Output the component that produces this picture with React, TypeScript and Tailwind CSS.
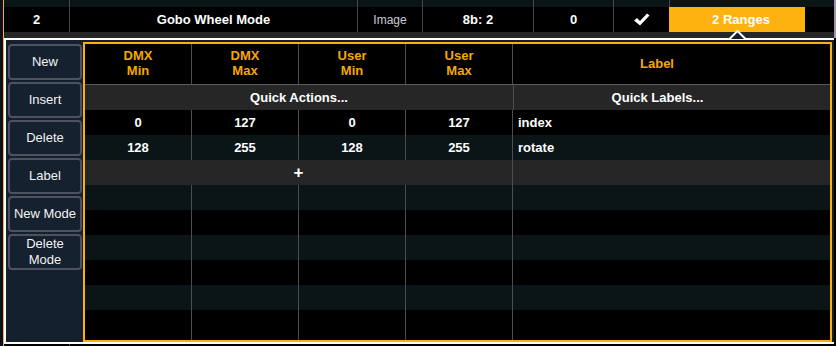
import React from 'react';

const topCols = [
    { w: 'w-[65px]', text: '2', cls: 'font-bold text-white' },
    { w: 'w-[288px]', text: 'Gobo Wheel Mode', cls: 'font-bold text-white' },
    { w: 'w-[65px]', text: 'Image', cls: 'text-[12px] text-[#c9c9d6]' },
    { w: 'w-[111px]', text: '8b: 2', cls: 'font-bold text-white' },
    { w: 'w-[80px]', text: '0', cls: 'font-bold text-white' },
    { w: 'w-[56px]', text: 'check', cls: '' },
];

const Check: React.FC = () => (
    <svg width="17" height="13" viewBox="0 0 17 13">
        <path d="M1 7.5 L4 5 L7 8 L14 0.5 L16.5 2.5 L7 12.5 Z" fill="#fff" />
    </svg>
);

const buttons = ['New', 'Insert', 'Delete', 'Label', 'New Mode', 'Delete\nMode'];

const rows = [
    { bg: 'bg-black', vals: ['0', '127', '0', '127'], label: 'index' },
    { bg: 'bg-[#0b1417]', vals: ['128', '255', '128', '255'], label: 'rotate' },
];

const emptyRows = ['bg-[#0b1417] h-[25px]', 'bg-black h-[25px]', 'bg-[#0b1417] h-[25px]', 'bg-black h-[25px]', 'bg-[#0b1417] h-[25px]', 'bg-black h-[30px]'];

const sep = 'border-r border-[#4d4d4d]';

const App: React.FC = () => {
    return (
        <div className="w-[836px] h-[346px] bg-black flex overflow-hidden font-['Liberation_Sans',Arial,sans-serif] text-[13px] leading-none">
            <div className="w-[3px] bg-[#0b1114]" />
            <div className="w-[1px] bg-[#fbb010]" />
            <div className="flex-1 flex flex-col">
                {/* fixture rows behind the popup */}
                <div className="flex">
                    <div className="flex-1 flex flex-col">
                        <div className="h-[7px] bg-[#0b1417] overflow-hidden">
                            <div className="flex h-[25px] -mt-[18px] items-center">
                                {topCols.map((c, i) => (
                                    <div key={i} className={`${c.w} h-full flex items-center justify-center ${i > 0 ? 'border-l border-[#474747]' : ''} ${c.cls}`}>
                                        {i === 0 ? '1' : ''}
                                    </div>
                                ))}
                                <div className="w-[136px] h-full border-l border-[#474747]" />
                            </div>
                        </div>
                        <div className="flex h-[25px] bg-black">
                            {topCols.map((c, i) => (
                                <div key={i} className={`${c.w} h-full flex items-center justify-center ${i > 0 ? 'border-l border-[#474747]' : ''} ${c.cls}`}>
                                    {c.text === 'check' ? <Check /> : c.text}
                                </div>
                            ))}
                            <div className="w-[136px] h-full bg-[#fdb20f] flex items-center justify-center pl-[8px] font-bold text-white">
                                2 Ranges
                            </div>
                        </div>
                        <div className="h-[6px] bg-[#262626] relative">
                            <svg className="absolute left-[725px] -top-[2px]" width="17" height="9" viewBox="0 0 17 9">
                                <path d="M0.5 9 L8.5 1 L16.5 9" fill="#14202e" stroke="#fff" strokeWidth="2" />
                            </svg>
                        </div>
                    </div>
                    <div className="w-[2px] bg-[#9d92ae]" />
                </div>

                {/* popup */}
                <div className="w-[830px] h-[306px] border-t-2 border-l-2 border-b-2 border-white bg-[#14202e] flex items-start">
                    <div className="w-[74px] ml-[2px] mt-[4px] flex flex-col gap-[2px]">
                        {buttons.map((b) => (
                            <div key={b} className="h-[36px] rounded-[4px] border-2 border-[#4e515e] bg-[#15212f] text-[#f2f2f2] flex items-center justify-center text-center whitespace-pre-line leading-[16px]">
                                {b}
                            </div>
                        ))}
                    </div>
                    <div className="ml-[1px] mt-[2px] w-[749px] h-[300px] border-2 border-[#fbb010] bg-black flex flex-col">
                        {/* header */}
                        <div className="grid grid-cols-[107px_107px_107px_107px_1fr] h-[41px] border-b border-[#5a5a5a] font-bold text-[#f5a800] leading-[15px]">
                            {['DMX\nMin', 'DMX\nMax', 'User\nMin', 'User\nMax'].map((h) => (
                                <div key={h} className={`${sep} flex items-center justify-center text-center whitespace-pre-line pb-[2px]`}>
                                    {h}
                                </div>
                            ))}
                            <div className="flex items-center justify-center pr-[29px] pb-[2px]">Label</div>
                        </div>
                        {/* quick actions */}
                        <div className="grid grid-cols-[428px_1fr] h-[25px] bg-[#262626] font-bold text-white">
                            <div className="flex items-center justify-center">Quick Actions...</div>
                            <div className="border-l border-[#4d4d4d] flex items-center justify-center pr-[29px]">Quick Labels...</div>
                        </div>
                        {rows.map((r) => (
                            <div key={r.label} className={`grid grid-cols-[107px_107px_107px_107px_1fr] h-[25px] ${r.bg} font-bold text-white`}>
                                {r.vals.map((v, i) => (
                                    <div key={i} className={`${sep} flex items-center justify-center`}>
                                        {v}
                                    </div>
                                ))}
                                <div className="flex items-center pl-[5px]">{r.label}</div>
                            </div>
                        ))}
                        <div className="grid grid-cols-[428px_1fr] h-[25px] bg-[#262626] font-bold text-white">
                            <div className={`${sep} flex items-center justify-center text-[17px]`}>+</div>
                            <div />
                        </div>
                        {emptyRows.map((r, i) => (
                            <div key={i} className={`grid grid-cols-[107px_107px_107px_107px_1fr] ${r}`}>
                                <div className={sep} />
                                <div className={sep} />
                                <div className={sep} />
                                <div className={sep} />
                                <div />
                            </div>
                        ))}
                    </div>
                </div>
                <div className="flex-1 bg-black flex">
                    <div className="w-[65px]" />
                    <div className="border-l border-[#474747]" />
                </div>
            </div>
        </div>
    );
};

export default App;
